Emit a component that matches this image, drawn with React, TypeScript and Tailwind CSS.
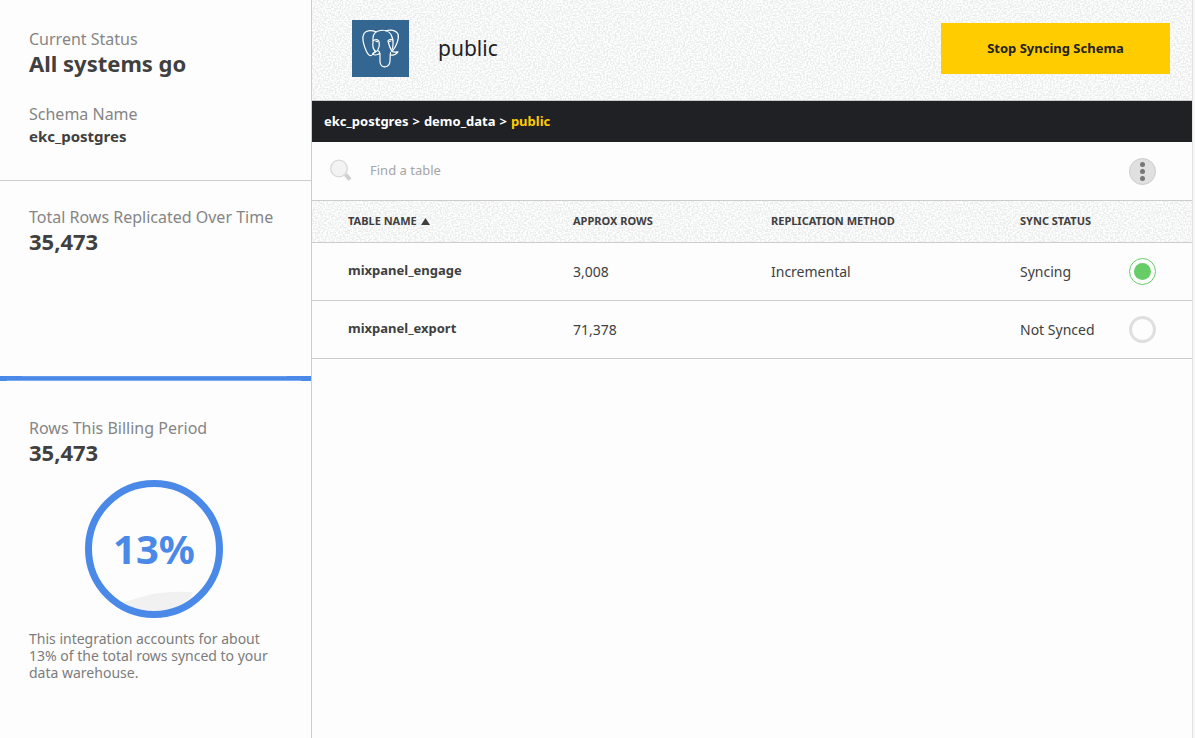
import { useState } from "react";

const rows = [
  { name: "mixpanel_engage", count: "3,008", method: "Incremental", synced: true },
  { name: "mixpanel_export", count: "71,378", method: "", synced: false },
];

const grain =
  "bg-[#ebecec] bg-[url('data:image/svg+xml,%3Csvg%20xmlns=%22http://www.w3.org/2000/svg%22%20width=%22200%22%20height=%22200%22%3E%3Cfilter%20id=%22n%22%3E%3CfeTurbulence%20type=%22fractalNoise%22%20baseFrequency=%220.6%22%20stitchTiles=%22stitch%22/%3E%3CfeColorMatrix%20values=%220%200%200%200%201%200%200%200%200%201%200%200%200%200%201%204%200%200%200%20-1.5%22/%3E%3C/filter%3E%3Crect%20width=%22200%22%20height=%22200%22%20filter=%22url(%23n)%22/%3E%3C/svg%3E')]";

function PostgresLogo() {
  return (
    <div className="h-[57px] w-[57px] shrink-0 bg-[#336791]">
      <svg viewBox="0 0 57 57" className="h-full w-full" fill="none" stroke="#fff" strokeWidth="1.200" strokeLinecap="round" strokeLinejoin="round" aria-hidden="true">
        <path d="M24 11.800C20 10 14.500 9.800 12 13.500C9.500 18 12 26 14.500 31.500C16 35 18.500 37 20.500 34.500L23.500 31.200" />
        <path d="M23.500 31.500C20.800 29 20.300 26.500 21 22C20.500 16.500 21.500 12.500 25.500 11.200C31 9.500 36.500 10.500 39 14.500C41 18.500 41.500 21 41 24.500C41.300 27.500 40.500 29 39.300 31" />
        <path d="M33.500 10.800C38 9.600 43.500 10 46 14C47.500 19 44 26.500 40.500 31" />
        <path d="M21.200 20.500C23.500 19.300 26 19.500 26.800 21C28 25 27.500 27 25.500 30.500C27.500 31 28 32.500 28 35V42C28.500 45.500 30 47 33 46.800C36.500 46.500 37.800 44.500 38 41C38.300 38 38 35.500 38.500 32.500" />
        <path d="M40.800 20C38.500 19 36.500 19.500 36 21C37 25.500 37.800 28 40 31.500C42 32.500 44 32 46 31.800C44.500 34 41.500 35.500 38.500 34.800" />
        <path d="M25.500 30.500C24 32.500 21.500 32 20.800 33.800C22.500 35.500 25.800 34.800 27.800 33.500" />
        <path d="M24 21.300L25.500 21.700M37.500 21.500L38.800 21" />
      </svg>
    </div>
  );
}

function SearchIcon() {
  return (
    <svg viewBox="0 0 24 24" className="h-6 w-6" fill="none" aria-hidden="true">
      <path d="M15.500 15.500L20 20.500" stroke="#d0d0d0" strokeWidth="4" />
      <circle cx="9" cy="9.500" r="8.300" fill="#f3f3f3" stroke="#d8d8d8" strokeWidth="1.300" />
    </svg>
  );
}

function Stat({ label, value }: { label: string; value: string }) {
  return (
    <div>
      <div className="text-[16px] leading-5 text-[#858585]">{label}</div>
      <div className="text-[22px] leading-7 font-bold">{value}</div>
    </div>
  );
}

export default function App() {
  const [synced, setSynced] = useState(rows.map((r) => r.synced));
  const [query, setQuery] = useState("");

  return (
    <div className="flex min-h-screen bg-[#fdfdfd] font-['Noto_Sans',sans-serif] text-[#404040]">
      <aside className="w-[312px] shrink-0 border-r border-[#cccccc]">
        <section className="h-[181px] border-b border-[#cccccc] px-[29px] pt-[29px]">
          <Stat label="Current Status" value="All systems go" />
          <div className="mt-[27px] text-[16px] leading-5 text-[#858585]">Schema Name</div>
          <div className="text-[15px] leading-6 font-bold">ekc_postgres</div>
        </section>
        <section className="h-[195px] px-[29px] pt-[26px]">
          <Stat label="Total Rows Replicated Over Time" value="35,473" />
        </section>
        <div className="h-[5px] bg-[#4a89e8]">
          <svg viewBox="0 0 311 5" className="block h-full w-full" preserveAspectRatio="none" aria-hidden="true">
            <path d="M22 0H287V1H22Z" fill="#669bec" />
            <path d="M7 4H301V5H7Z" fill="#7eacf0" />
          </svg>
        </div>
        <section className="px-[29px] pt-[37px]">
          <Stat label="Rows This Billing Period" value="35,473" />
          <div className="mt-[14px] ml-14 h-[138px] w-[138px]">
            <svg viewBox="0 0 138 138" className="h-full w-full" role="img" aria-label="13%">
              <path d="M30 124Q44 121 60 116T108 112Q100 132 69 135Q48 134 30 124Z" fill="#f1f1f2" />
              <circle cx="69" cy="69" r="65.500" fill="none" stroke="#4a89e8" strokeWidth="7" />
              <text x="69" y="84" textAnchor="middle" fontSize="40" fontWeight="700" fill="#4a89e8">13%</text>
            </svg>
          </div>
          <p className="mt-3 text-[14px] leading-[17px] text-[#7c7c7c]">
            This integration accounts for about 13% of the total rows synced to your data warehouse.
          </p>
        </section>
      </aside>

      <main className="min-w-0 flex-1">
        <header className={"flex h-[101px] items-center border-b border-[#cccccc] pr-[22px] pb-[3px] pl-10 " + grain}>
          <PostgresLogo />
          <h1 className="ml-[29px] flex-1 text-[21px] text-[#222]">public</h1>
          <button className="h-[51px] w-[229px] bg-[#ffcc00] text-[13px] font-bold text-[#222]">Stop Syncing Schema</button>
        </header>
        <nav className="flex h-[41px] items-center gap-1 bg-[#202125] px-3 text-[13px] font-bold text-white" aria-label="Breadcrumb">
          <a href="#connection">ekc_postgres</a>
          <span>&gt;</span>
          <a href="#database">demo_data</a>
          <span>&gt;</span>
          <a href="#schema" className="text-[#ffcc00]">public</a>
        </nav>
        <div className="flex h-[59px] items-center border-b border-[#cccccc] pr-9 pl-[18px]">
          <SearchIcon />
          <input
            aria-label="Find a table"
            placeholder="Find a table"
            value={query}
            onChange={(e) => setQuery(e.target.value)}
            className="ml-4 min-w-0 flex-1 bg-transparent text-[13px] outline-none placeholder:text-[#a5a5a5]"
          />
          <button aria-label="More options" className="flex h-[27px] w-[27px] flex-col items-center justify-center gap-[2px] rounded-full border border-[#cccccc] bg-[#e0e0e0]">
            <span className="h-[5px] w-[5px] rounded-full bg-[#777]" />
            <span className="h-[5px] w-[5px] rounded-full bg-[#777]" />
            <span className="h-[5px] w-[5px] rounded-full bg-[#777]" />
          </button>
        </div>
        <table className="w-full table-fixed border-collapse text-left text-[14px]">
          <thead>
            <tr className={"h-[41px] border-b border-[#cccccc] text-[11px] " + grain}>
              <th className="w-[261px] pl-9">
                <button className="flex items-center gap-1 font-bold">
                  TABLE NAME
                  <svg viewBox="0 0 9 7" className="h-[7px] w-[9px]" aria-hidden="true">
                    <path d="M4.500 0L9 7H0Z" fill="#404040" />
                  </svg>
                </button>
              </th>
              <th className="w-[198px]">APPROX ROWS</th>
              <th>REPLICATION METHOD</th>
              <th className="w-[109px]">SYNC STATUS</th>
              <th className="w-[63px]" aria-label="Sync" />
            </tr>
          </thead>
          <tbody>
            {rows.map((row, i) =>
              row.name.includes(query) ? (
                <tr key={row.name} className="h-[58px] border-b border-[#cccccc]">
                  <td className="pl-9 text-[13px] font-bold">{row.name}</td>
                  <td>{row.count}</td>
                  <td>{row.method}</td>
                  <td>{synced[i] ? "Syncing" : "Not Synced"}</td>
                  <td>
                    <input
                      type="checkbox"
                      aria-label={"Sync " + row.name}
                      checked={synced[i]}
                      onChange={() => setSynced(synced.map((s, j) => (j === i ? !s : s)))}
                      className="block h-[27px] w-[27px] appearance-none rounded-full border-3 border-[#dfdfdf] checked:border checked:border-[#66cc66] checked:bg-[#66cc66] checked:bg-clip-content checked:p-1"
                    />
                  </td>
                </tr>
              ) : null,
            )}
          </tbody>
        </table>
      </main>
      <div className="w-[3px] shrink-0 border-l border-[#e0e0e0] bg-[#f7f7f7]" />
    </div>
  );
}
